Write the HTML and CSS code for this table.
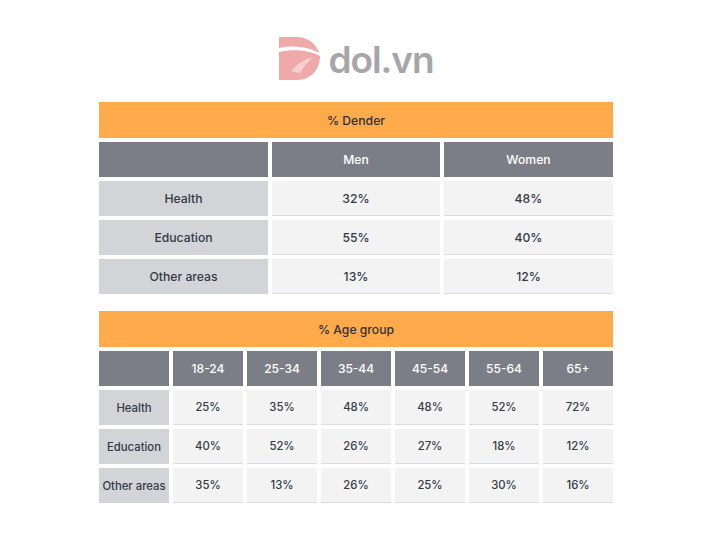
FILE: index.html
```html
<!DOCTYPE html>
<html lang="en">
<head>
<meta charset="utf-8">
<title>dol.vn</title>
<link rel="stylesheet" href="styles.css">
</head>
<body>
<div class="page">
  <div class="logo">
    <svg class="logo-mark" width="42" height="44" viewBox="0 0 42 44" aria-hidden="true">
      <path d="M0 0 H17 C28 0 37 6 40 16 C30 10 14 8 0 11 Z" fill="#efa9a8"/>
      <path d="M0 15 C14 12 30 13 41 19 C41 32 32 43 18 43 H0 Z" fill="#efa9a8"/>
      <path d="M12 34 C18 27 26 22 34 20 C29 25 24 30 21 36 Z" fill="#f7cfce"/>
    </svg>
    <span class="logo-text">dol.vn</span>
  </div>

  <div class="table t-gender">
    <div class="cell title span-all">% Dender</div>
    <div class="cell head"></div>
    <div class="cell head">Men</div>
    <div class="cell head">Women</div>
    <div class="cell label">Health</div>
    <div class="cell data">32%</div>
    <div class="cell data">48%</div>
    <div class="cell label">Education</div>
    <div class="cell data">55%</div>
    <div class="cell data">40%</div>
    <div class="cell label">Other areas</div>
    <div class="cell data">13%</div>
    <div class="cell data">12%</div>
  </div>

  <div class="table t-age">
    <div class="cell title span-all">% Age group</div>
    <div class="cell head"></div>
    <div class="cell head">18-24</div>
    <div class="cell head">25-34</div>
    <div class="cell head">35-44</div>
    <div class="cell head">45-54</div>
    <div class="cell head">55-64</div>
    <div class="cell head">65+</div>
    <div class="cell label">Health</div>
    <div class="cell data">25%</div>
    <div class="cell data">35%</div>
    <div class="cell data">48%</div>
    <div class="cell data">48%</div>
    <div class="cell data">52%</div>
    <div class="cell data">72%</div>
    <div class="cell label">Education</div>
    <div class="cell data">40%</div>
    <div class="cell data">52%</div>
    <div class="cell data">26%</div>
    <div class="cell data">27%</div>
    <div class="cell data">18%</div>
    <div class="cell data">12%</div>
    <div class="cell label">Other areas</div>
    <div class="cell data">35%</div>
    <div class="cell data">13%</div>
    <div class="cell data">26%</div>
    <div class="cell data">25%</div>
    <div class="cell data">30%</div>
    <div class="cell data">16%</div>
  </div>
</div>
</body>
</html>
```

FILE: styles.css
```css
* { box-sizing: border-box; }

html, body {
  margin: 0;
  background: #ffffff;
}

body {
  font-family: Inter, "Liberation Sans", sans-serif;
  color: #343a46;
}

.page {
  display: flex;
  flex-direction: column;
  align-items: center;
  padding-top: 37px;
}

.logo {
  display: flex;
  align-items: center;
  gap: 8px;
  height: 44px;
  margin-bottom: 21px;
}

.logo-mark {
  display: block;
}

.logo-text {
  font-size: 37px;
  font-weight: 600;
  letter-spacing: -1.1px;
  color: #a6a6a9;
  line-height: 44px;
  padding-top: 2px;
}

.table {
  display: grid;
  gap: 4px;
  width: 514px;
  grid-template-rows: 36px repeat(4, 35px);
}

.t-gender {
  grid-template-columns: 169px 168px 169px;
  font-size: 12.2px;
}

.t-age {
  grid-template-columns: repeat(7, 70px);
  font-size: 11.3px;
  margin-top: 17px;
}

.cell {
  display: flex;
  align-items: center;
  justify-content: center;
  font-weight: 500;
  white-space: nowrap;
}

.span-all {
  grid-column: 1 / -1;
}

.title {
  background: #ffab4c;
  color: #2e323b;
  font-size: 12.2px;
}

.head {
  background: #7c7e87;
  color: #ffffff;
}

.t-age .head {
  font-size: 12px;
}

.label {
  background: #d3d4d8;
  color: #343a46;
}

.data {
  background: #f3f3f3;
  border-bottom: 1px solid #dcdde0;
  color: #343a46;
}
```
